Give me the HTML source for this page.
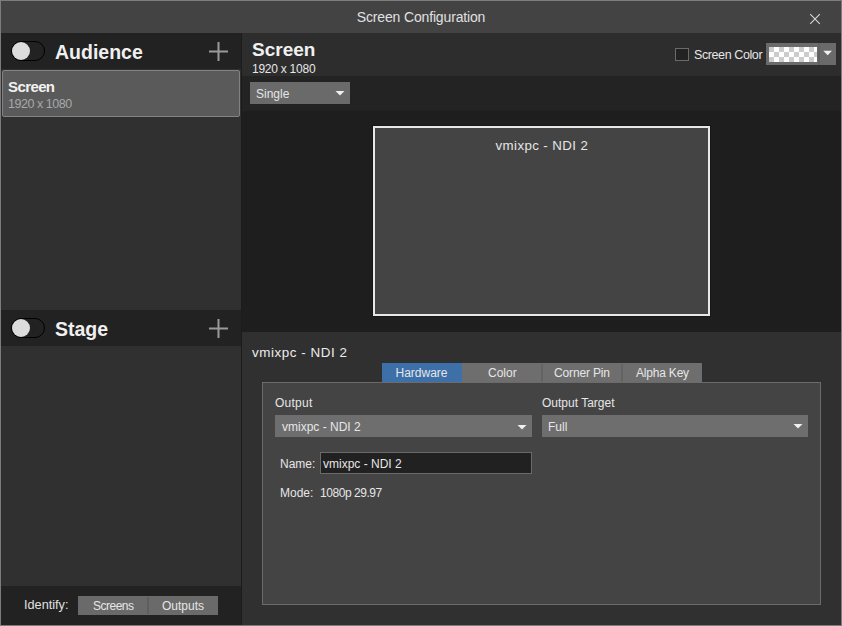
<!DOCTYPE html>
<html><head><meta charset="utf-8">
<style>
*{margin:0;padding:0;box-sizing:border-box;}
html,body{width:842px;height:626px;overflow:hidden;background:#7c7c7c;}
body{position:relative;font-family:"Liberation Sans",sans-serif;color:#e6e6e6;}
.a{position:absolute;}
.t{position:absolute;white-space:nowrap;line-height:1;}
</style></head><body>
<!-- window interior -->
<div class="a" style="left:1px;top:1px;width:840px;height:624px;background:#303030;"></div>
<!-- title bar -->
<div class="a" style="left:1px;top:1px;width:840px;height:32px;background:#434343;"></div>
<div class="t" style="left:1px;width:840px;text-align:center;top:10px;font-size:14px;letter-spacing:-0.15px;color:#e0e0e0;">Screen Configuration</div>
<svg class="a" style="left:805px;top:9px;" width="20" height="20"><path d="M5.2 5.2 L14.8 14.8 M14.8 5.2 L5.2 14.8" stroke="#d8d8d8" stroke-width="1.1"/></svg>

<!-- left panel -->
<div class="a" style="left:1px;top:33px;width:240px;height:36px;background:#222;"></div>
<div class="a" style="left:11px;top:41px;width:34px;height:20px;border:1.7px solid #000;border-radius:10px;background:#222;"></div>
<div class="a" style="left:12px;top:42px;width:18px;height:18px;border-radius:9px;background:#dcdcdc;"></div>
<div class="t" style="left:55px;top:43px;font-size:19.5px;font-weight:bold;color:#f0f0f0;">Audience</div>
<svg class="a" style="left:200px;top:33px;" width="40" height="36"><path d="M9 18.5 H28 M18.5 9 V28" stroke="#9a9a9a" stroke-width="2"/></svg>

<div class="a" style="left:2px;top:70px;width:238px;height:47px;background:#5a5a5a;border:1px solid #828282;border-radius:2px;"></div>
<div class="t" style="left:8px;top:79.2px;font-size:15px;letter-spacing:-0.6px;font-weight:bold;color:#f2f2f2;">Screen</div>
<div class="t" style="left:8px;top:97.6px;font-size:12.5px;letter-spacing:-0.45px;color:#a8a8a8;">1920 x 1080</div>

<div class="a" style="left:1px;top:310px;width:240px;height:36px;background:#222;"></div>
<div class="a" style="left:11px;top:318px;width:34px;height:20px;border:1.7px solid #000;border-radius:10px;background:#222;"></div>
<div class="a" style="left:12px;top:319px;width:18px;height:18px;border-radius:9px;background:#dcdcdc;"></div>
<div class="t" style="left:55px;top:320px;font-size:19.5px;font-weight:bold;color:#f0f0f0;">Stage</div>
<svg class="a" style="left:200px;top:310px;" width="40" height="36"><path d="M9 18.5 H28 M18.5 9 V28" stroke="#9a9a9a" stroke-width="2"/></svg>

<div class="a" style="left:1px;top:586px;width:240px;height:39px;background:#222;"></div>
<div class="t" style="left:24px;top:599px;font-size:12.7px;color:#e0e0e0;">Identify:</div>
<div class="a" style="left:78px;top:596px;width:140px;height:19px;background:#6a6a6a;"></div>
<div class="a" style="left:147px;top:597px;width:2px;height:17px;background:#5e5e5e;"></div>
<div class="t" style="left:93px;top:600px;font-size:12px;letter-spacing:-0.5px;color:#e6e6e6;">Screens</div>
<div class="t" style="left:162px;top:600px;font-size:12px;color:#e6e6e6;">Outputs</div>

<!-- divider -->
<div class="a" style="left:241px;top:33px;width:1px;height:592px;background:#1c1c1c;"></div>

<!-- right header -->
<div class="a" style="left:242px;top:33px;width:599px;height:43px;background:#2d2d2d;"></div>
<div class="t" style="left:252px;top:40px;font-size:19px;font-weight:bold;color:#f0f0f0;">Screen</div>
<div class="t" style="left:252px;top:63px;font-size:12px;letter-spacing:-0.25px;color:#e6e6e6;">1920 x 1080</div>
<div class="a" style="left:675px;top:48px;width:14px;height:13px;border:1px solid #6a6a6a;background:#222;"></div>
<div class="t" style="left:694px;top:48.5px;font-size:12.5px;letter-spacing:-0.4px;color:#e6e6e6;">Screen Color</div>
<div class="a" style="left:766px;top:43px;width:70px;height:22px;background:#6a6a6a;"></div>
<div class="a" style="left:818px;top:43px;width:2px;height:22px;background:#616161;"></div>
<svg class="a" style="left:769px;top:47px;" width="48" height="15">
<defs><pattern id="ck" width="10" height="10" patternUnits="userSpaceOnUse"><rect width="10" height="10" fill="#fff"/><rect width="5" height="5" fill="#cccccc"/><rect x="5" y="5" width="5" height="5" fill="#cccccc"/></pattern></defs>
<rect width="48" height="15" fill="url(#ck)"/></svg>
<svg class="a" style="left:816px;top:44px;" width="20" height="14"><path d="M7.3 6.8 H16 L11.65 11.2 Z" fill="#f0f0f0"/></svg>

<!-- toolbar -->
<div class="a" style="left:242px;top:76px;width:599px;height:35px;background:#232323;"></div>
<div class="a" style="left:250px;top:82px;width:100px;height:22px;background:#6a6a6a;"></div>
<div class="t" style="left:256px;top:88px;font-size:12px;color:#e6e6e6;">Single</div>
<svg class="a" style="left:330px;top:86px;" width="20" height="14"><path d="M5.5 4.9 H14.5 L10 9.5 Z" fill="#f0f0f0"/></svg>

<!-- preview -->
<div class="a" style="left:242px;top:111px;width:599px;height:221px;background:#1e1e1e;"></div>
<div class="a" style="left:373px;top:126px;width:337px;height:190px;background:#444;border:2px solid #e8e8e8;box-shadow:0 0 0 1px #171717;"></div>
<div class="t" style="left:495.5px;top:138.6px;font-size:13.3px;letter-spacing:0.4px;color:#e6e6e6;">vmixpc - NDI 2</div>

<!-- details -->
<div class="t" style="left:252px;top:345.6px;font-size:13.4px;letter-spacing:0.55px;color:#ececec;">vmixpc - NDI 2</div>
<div class="a" style="left:262px;top:382px;width:559px;height:223px;background:#444;border:1px solid #6b6b6b;"></div>
<div class="a" style="left:382px;top:363px;width:80px;height:19px;background:#3d6fa9;"></div>
<div class="a" style="left:462px;top:363px;width:240px;height:19px;background:#6e6e6e;"></div>
<div class="a" style="left:541px;top:364px;width:2px;height:18px;background:#636363;"></div>
<div class="a" style="left:621px;top:364px;width:2px;height:18px;background:#636363;"></div>
<div class="t" style="left:395.5px;top:367px;font-size:12px;color:#e6e6e6;">Hardware</div>
<div class="t" style="left:488px;top:367px;font-size:12px;color:#e6e6e6;">Color</div>
<div class="t" style="left:554px;top:367px;font-size:12px;letter-spacing:-0.15px;color:#e6e6e6;">Corner Pin</div>
<div class="t" style="left:636px;top:367px;font-size:12px;letter-spacing:-0.2px;color:#e6e6e6;">Alpha Key</div>

<div class="t" style="left:275px;top:397px;font-size:12px;letter-spacing:0.25px;color:#e6e6e6;">Output</div>
<div class="a" style="left:275px;top:415px;width:257px;height:22px;background:#6e6e6e;"></div>
<div class="t" style="left:282px;top:421px;font-size:12px;color:#e6e6e6;">vmixpc - NDI 2</div>
<svg class="a" style="left:512px;top:418px;" width="20" height="14"><path d="M5.5 6.9 H14.5 L10 11.5 Z" fill="#f0f0f0"/></svg>

<div class="t" style="left:542px;top:397px;font-size:12px;color:#e6e6e6;">Output Target</div>
<div class="a" style="left:542px;top:415px;width:266px;height:22px;background:#6e6e6e;"></div>
<div class="t" style="left:548px;top:421px;font-size:12px;color:#e6e6e6;">Full</div>
<svg class="a" style="left:788px;top:418px;" width="20" height="14"><path d="M5.5 5.9 H14.5 L10 10.45 Z" fill="#f0f0f0"/></svg>

<div class="t" style="left:280px;top:458px;font-size:12px;color:#e6e6e6;">Name:</div>
<div class="a" style="left:320px;top:452px;width:212px;height:22px;background:#212121;border:1px solid #6a6a6a;"></div>
<div class="t" style="left:323px;top:458px;font-size:12px;color:#e6e6e6;">vmixpc - NDI 2</div>
<div class="t" style="left:280px;top:487px;font-size:12px;color:#e6e6e6;">Mode:</div>
<div class="t" style="left:320px;top:487px;font-size:12px;letter-spacing:-0.45px;color:#e6e6e6;">1080p 29.97</div>
</body></html>
